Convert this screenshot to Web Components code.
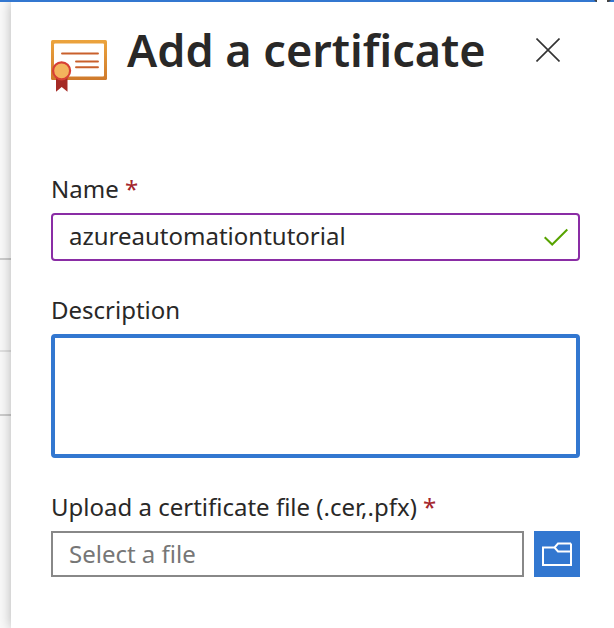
<!DOCTYPE html>
<html lang="en">
<head>
<meta charset="utf-8">
<title>Add a certificate</title>
<style>
html, body { height: 100%; margin: 0; }
body { background: #fff; color: #292827; font: 24px/32px "Noto Sans", "Open Sans", sans-serif; overflow: hidden; }
</style>
</head>
<body>
<portal-shell>
  <side-panel heading="Add a certificate">
    <text-field label="Name" value="azureautomationtutorial" required valid></text-field>
    <text-area-field label="Description"></text-area-field>
    <file-field label="Upload a certificate file (.cer,.pfx)" placeholder="Select a file" required></file-field>
  </side-panel>
</portal-shell>
<script>
const define = (name, html, setup) => {
  const template = document.createElement("template");
  template.innerHTML = "<style>*{box-sizing:border-box}</style>" + html;
  customElements.define(name, class extends HTMLElement {
    connectedCallback() {
      if (this.shadowRoot) return;
      const root = this.attachShadow({ mode: "open" });
      root.append(template.content.cloneNode(true));
      if (setup) setup(this, root);
    }
  });
};

define("cert-icon", `
<style>:host{display:block;flex:none;width:56px;height:52px} svg{display:block}</style>
<svg width="56" height="52" viewBox="0 0 56 52" aria-hidden="true">
  <defs><linearGradient id="frame" x1="0" y1="0" x2="0" y2="1"><stop offset="0" stop-color="#eca43d"/><stop offset="1" stop-color="#cf7a2c"/></linearGradient></defs>
  <rect width="56" height="40" rx="1.5" fill="url(#frame)"/>
  <rect x="3" y="3.5" width="50" height="33" rx="1" fill="#fff"/>
  <path d="M11 13.500H47M25 21.500H47M25 27.200H47" stroke="#c9602c" stroke-width="1.900" stroke-linecap="round"/>
  <path d="M5 37H16.500V51.800L10.700 47L5 51.800Z" fill="#a52a25"/>
  <circle cx="10.600" cy="30.800" r="8.500" fill="#f3b35d" stroke="#d73f35" stroke-width="2.200"/>
</svg>`);

define("field-label", `
<style>
:host{display:block;margin-bottom:8px}
span{display:none;color:#a4262c}
:host([required]) span{display:inline}
</style>
<slot></slot><span> *</span>`);

define("text-field", `
<style>
:host{display:block}
.box{display:flex;align-items:center;height:48px;padding:0 10px 0 16px;border:2px solid #8a2da5;border-radius:4px}
input{flex:1;min-width:0;border:0;padding:0 0 2px;outline:0;background:none;font:inherit;color:inherit}
</style>
<label for="control"><field-label></field-label></label>
<div class="box"><input id="control" type="text">
<svg width="24" height="20" viewBox="0 0 24 20" fill="none" stroke="#57a300" stroke-width="2" aria-hidden="true"><path d="M.7 10.200L8.200 17.500L23.300 2.500"/></svg></div>`, (el, root) => {
  const label = root.querySelector("field-label");
  label.textContent = el.getAttribute("label");
  label.toggleAttribute("required", el.hasAttribute("required"));
  root.querySelector("input").value = el.getAttribute("value") || "";
  if (!el.hasAttribute("valid")) root.querySelector("svg").remove();
});

define("text-area-field", `
<style>
:host{display:block}
textarea{display:block;width:100%;height:124px;padding:8px 14px;border:4px solid #3277d0;border-radius:4px;outline:0;resize:none;background:#fff;font:inherit;color:inherit}
</style>
<label for="control"><field-label></field-label></label>
<textarea id="control"></textarea>`, (el, root) => {
  root.querySelector("field-label").textContent = el.getAttribute("label");
});

define("file-field", `
<style>
:host{display:block}
.row{display:flex;gap:10px}
input{flex:1;min-width:0;height:46px;padding:0 16px 2px;border:2px solid #888;border-radius:0;outline:0;background:#fff;font:inherit;color:inherit}
input::placeholder{color:#767676;opacity:1}
button{display:grid;place-items:center;width:46px;height:46px;padding:0;border:0;background:#3277d0;color:#fff}
</style>
<label for="control"><field-label></field-label></label>
<div class="row"><input id="control" type="text">
<button type="button" aria-label="Browse for a file"><svg width="30" height="24" viewBox="0 0 30 24" fill="none" stroke="currentColor" stroke-width="2" aria-hidden="true"><path d="M29 1.500H16L12.500 5.500L16 9.500H29M12.500 5.500H1V23H29V1.500"/></svg></button></div>`, (el, root) => {
  const label = root.querySelector("field-label");
  label.textContent = el.getAttribute("label");
  label.toggleAttribute("required", el.hasAttribute("required"));
  root.querySelector("input").placeholder = el.getAttribute("placeholder");
});

define("side-panel", `
<style>
:host{display:block;flex:1;min-width:0;padding:0 34px 0 40px;background:#fff;box-shadow:0 0 12px rgba(0,0,0,.28)}
header{display:flex;align-items:flex-start;padding-top:12px;margin-bottom:81px}
cert-icon{margin-top:26px}
h1{flex:1;margin:6px 0 0 20px;font-size:45px;line-height:60px;font-weight:600;white-space:nowrap}
button{display:grid;place-items:center;flex:none;width:32px;height:32px;margin:20px 16px 0 0;padding:0;border:0;background:none;color:#333}
.fields{display:flex;flex-direction:column;gap:33px}
</style>
<header><cert-icon></cert-icon><h1></h1>
<button type="button" aria-label="Close"><svg width="24" height="24" viewBox="0 0 24 24" fill="none" stroke="currentColor" stroke-width="1.600" aria-hidden="true"><path d="M.5 .5L23.500 23.500M23.500 .5L.5 23.500"/></svg></button></header>
<div class="fields"><slot></slot></div>`, (el, root) => {
  root.querySelector("h1").textContent = el.getAttribute("heading");
});

define("portal-shell", `
<style>
:host{display:flex;flex-direction:column;min-height:100vh}
.bar{display:flex;justify-content:flex-end;height:2px;padding-right:2px;background:#3277d0}
.bar svg{display:block}
.main{display:flex;flex:1;overflow:hidden}
.behind{width:11px;display:grid;grid-template-rows:258px 92px 64px 1fr;background:#f9f9f9}
.behind i{border-bottom:2px solid #ccc}
.behind i:nth-child(1){background:#fafafa}
.behind i:nth-child(2){border-color:#e0e0e0}
.behind i:last-child{border:0}
</style>
<div class="bar"><svg width="19" height="2" viewBox="0 0 19 2" aria-hidden="true"><path d="M1 0H18L16 2H3Z" fill="#454545"/><path d="M4 0H14V2H4Z" fill="#fff"/></svg></div>
<div class="main"><div class="behind"><i></i><i></i><i></i><i></i></div><slot></slot></div>`);
</script>
</body>
</html>
